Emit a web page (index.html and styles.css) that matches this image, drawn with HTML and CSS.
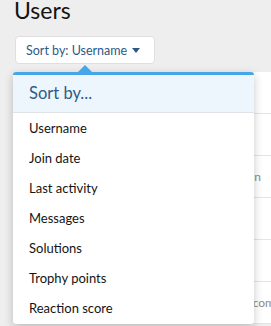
FILE: index.html
```html
<!DOCTYPE html>
<html lang="en">
<head>
    <meta charset="UTF-8">
    <meta name="viewport" content="width=device-width, initial-scale=1.0">
    <title>Users</title>
    <link rel="stylesheet" href="styles.css">
</head>
<body>
    <div class="page">
        <h1>Users</h1>
        <div class="sort">
            <button type="button" class="sort-button">Sort by: Username <span class="caret"></span></button>
        </div>
        <div class="members">
            <div class="member-row"></div>
            <div class="member-row"></div>
            <div class="member-row"><span class="meta">Admin</span></div>
            <div class="member-row"></div>
            <div class="member-row"></div>
            <div class="member-row"><span class="meta meta-long">mail.com</span></div>
        </div>

        <!-- Menu aberto sobre a lista -->
        <div class="menu">
            <span class="menu-arrow"></span>
            <div class="menu-header">Sort by...</div>
            <a href="#" class="menu-item">Username</a>
            <a href="#" class="menu-item">Join date</a>
            <a href="#" class="menu-item">Last activity</a>
            <a href="#" class="menu-item">Messages</a>
            <a href="#" class="menu-item">Solutions</a>
            <a href="#" class="menu-item">Trophy points</a>
            <a href="#" class="menu-item">Reaction score</a>
        </div>
    </div>
</body>
</html>
```

FILE: styles.css
```css
body {
    margin: 0;
    background-color: #eeeeee;
    font-family: Lato, "Noto Sans", sans-serif;
    color: #141414;
    overflow: hidden;
}
.page {
    position: relative;
    padding-left: 14px;
    height: 326px;
}
h1 {
    margin: 0;
    font-size: 23px;
    font-weight: 400;
    line-height: 21px;
}
.sort {
    margin-top: 15px;
    padding-left: 1px;
}
.sort-button {
    height: 28px;
    width: 140px;
    padding: 0 10px;
    background-color: #fff;
    border: 1px solid #dfdfdf;
    border-radius: 4px;
    color: #2c5a86;
    font-family: inherit;
    font-size: 12.5px;
    text-align: left;
    white-space: nowrap;
}
.caret {
    display: inline-block;
    width: 0;
    height: 0;
    margin-left: 2px;
    vertical-align: 2px;
    border-left: 4px solid transparent;
    border-right: 4px solid transparent;
    border-top: 5px solid #2c5a86;
}
.members {
    margin-top: 8px;
    background-color: #fff;
}
.member-row {
    height: 41px;
    border-bottom: 1px solid #e4e4e4;
    display: flex;
    align-items: center;
    justify-content: flex-end;
    padding-right: 10px;
    font-size: 12px;
    color: #8c8c8c;
}
.meta-long {
    margin-right: -14px;
}
.menu {
    position: absolute;
    left: 13px;
    top: 72px;
    width: 241px;
    height: 252px;
    background-color: #fff;
    border-top: 3px solid #47a6e8;
    border-radius: 3px;
    box-shadow: 0 3px 10px rgba(0, 0, 0, 0.22);
    box-sizing: border-box;
}
.menu-arrow {
    position: absolute;
    left: 65px;
    top: -10px;
    width: 0;
    height: 0;
    border-left: 7px solid transparent;
    border-right: 7px solid transparent;
    border-bottom: 7px solid #47a6e8;
}
.menu-header {
    height: 37px;
    line-height: 37px;
    padding-left: 16px;
    background-color: #edf5fd;
    border-bottom: 1px solid #dfe3e7;
    color: #2f5c88;
    font-size: 16.5px;
}
.menu-item {
    display: block;
    height: 30px;
    line-height: 30px;
    padding-left: 16px;
    color: #141414;
    font-size: 13px;
    text-decoration: none;
}
```
